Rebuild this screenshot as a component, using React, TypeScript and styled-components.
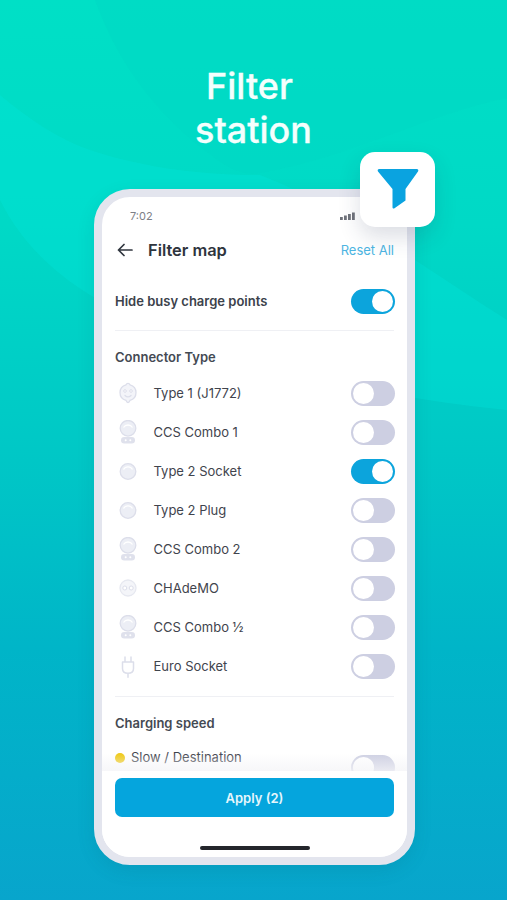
import styled, { createGlobalStyle } from "styled-components";

const GlobalStyle = createGlobalStyle`
  html, body {
    margin: 0;
    padding: 0;
  }
  body {
    font-family: "Inter", "Liberation Sans", sans-serif;
  }
`;

const Page = styled.div`
  position: relative;
  width: 507px;
  height: 900px;
  overflow: hidden;
  display: flex;
  flex-direction: column;
  align-items: center;
  padding-top: 64px;
  box-sizing: border-box;
  background: linear-gradient(180deg, #00e0c6 0%, #00d9c6 25%, #00c8c6 50%, #00b5c8 72%, #08a5cc 100%);
`;

const Swirl = styled.svg`
  position: absolute;
  left: 0;
  top: 0;
`;

const Title = styled.h1`
  position: relative;
  margin: 0 8px 0 0;
  color: #f4fffd;
  font-size: 36px;
  font-weight: 500;
  line-height: 44px;
  text-align: center;
  -webkit-text-stroke: 0.3px #f4fffd;
`;

const TitleLine = styled.span<{ $shift: number }>`
  display: block;
  padding-left: ${(p) => p.$shift}px;
`;

const Phone = styled.div`
  position: relative;
  width: 321px;
  height: 676px;
  margin-top: 37px;
  margin-left: 2px;
  box-sizing: border-box;
  border: 8px solid #e3e5ee;
  border-radius: 36px;
  background: #fff;
  box-shadow: 0 6px 18px rgba(0, 80, 100, 0.12);
  display: flex;
  flex-direction: column;
`;

const Badge = styled.div`
  position: absolute;
  top: -45px;
  right: -28px;
  width: 75px;
  height: 75px;
  border-radius: 15px;
  background: #fff;
  box-shadow: 0 10px 22px rgba(40, 50, 90, 0.16);
  display: flex;
  align-items: center;
  justify-content: center;
  z-index: 2;
`;

const StatusBar = styled.div`
  height: 38px;
  padding: 0 52px 0 28px;
  display: flex;
  align-items: center;
  justify-content: space-between;
  color: #7d8087;
  font-size: 11px;
`;

const Header = styled.div`
  height: 30px;
  padding: 0 13px 0 15px;
  display: flex;
  align-items: center;
`;

const BackButton = styled.div`
  width: 31px;
  height: 20px;
  display: flex;
  align-items: center;
`;

const HeaderTitle = styled.div`
  flex: 1;
  color: #2e343d;
  font-size: 16.4px;
  font-weight: 600;
`;

const ResetLink = styled.div`
  color: #4db5e2;
  font-size: 13px;
`;

const Scroll = styled.div`
  height: 506px;
  overflow: hidden;
  padding: 24px 12px 0 13px;
  box-sizing: border-box;
  flex-shrink: 0;
`;

const Row = styled.div`
  height: 25px;
  display: flex;
  align-items: center;
  justify-content: space-between;
`;

const RowStrong = styled.div`
  padding-bottom: 2px;
  color: #3c424b;
  font-size: 13px;
  font-weight: 600;
`;

const Divider = styled.div`
  height: 1px;
  margin: 16px 1px 18px 0;
  background: #eff0f4;
`;

const SectionTitle = styled.div`
  height: 17px;
  line-height: 17px;
  color: #444a53;
  font-size: 13px;
  font-weight: 600;
`;

const List = styled.div`
  margin-top: 15px;
  margin-bottom: 17px;
  display: flex;
  flex-direction: column;
  gap: 14px;

  & + ${Divider} {
    margin-top: 0;
  }
`;

const Label = styled.div`
  flex: 1;
  display: flex;
  align-items: center;
  color: #3f444d;
  font-size: 13px;
`;

const LabelText = styled.span`
  padding-bottom: 1px;
`;

const IconSlot = styled.div`
  width: 38.5px;
  height: 25px;
  padding-left: 1px;
  box-sizing: border-box;
  display: flex;
  align-items: center;
`;

const Toggle = styled.div<{ $on?: boolean }>`
  position: relative;
  flex-shrink: 0;
  width: 44px;
  height: 25px;
  border-radius: 13px;
  background: ${(p) => (p.$on ? "#0ca4dc" : "#cdcfe2")};

  &::after {
    content: "";
    position: absolute;
    top: 2px;
    left: ${(p) => (p.$on ? "21px" : "2px")};
    width: 21px;
    height: 21px;
    border-radius: 50%;
    background: #fff;
  }
`;

const SpeedRow = styled.div`
  margin-top: 17px;
  display: flex;
  justify-content: space-between;
  align-items: flex-start;
`;

const SpeedLabel = styled.div`
  display: flex;
  align-items: center;
  gap: 6px;
  color: #3f444d;
  font-size: 13px;
  line-height: 17px;
`;

const Dot = styled.span`
  width: 10px;
  height: 10px;
  border-radius: 50%;
  background: #efc915;
`;

const SpeedToggle = styled(Toggle)`
  margin-top: 6px;
`;

const Footer = styled.div`
  position: relative;
  flex: 1;
  padding: 7px 13px 0;
  display: flex;
  flex-direction: column;
  align-items: center;
  border-radius: 0 0 28px 28px;
  background: #fff;

  &::before {
    content: "";
    position: absolute;
    left: 0;
    right: 0;
    top: -18px;
    height: 18px;
    background: linear-gradient(rgba(255, 255, 255, 0), rgba(244, 244, 247, 0.75));
  }
`;

const ApplyButton = styled.button`
  width: 279px;
  height: 39px;
  border: 0;
  border-radius: 7px;
  background: #05a5dd;
  color: #e6f6fc;
  font-family: inherit;
  font-size: 13px;
  font-weight: 600;
`;

const HomeBar = styled.div`
  width: 110px;
  height: 4px;
  margin-top: 29px;
  border-radius: 2px;
  background: #24262b;
`;

type PlugKind = "type1" | "combo" | "type2" | "chademo" | "euro";

const PlugIcon = ({ kind }: { kind: PlugKind }) => {
  const line = "#dcdeea";
  const fill = "#eceef5";
  return (
    <svg width="24" height="26" viewBox="0 0 24 26" fill="none">
      {kind === "type1" && (
        <>
          <path d="M10 3.800c.4-1 1.100-1.500 2-1.500s1.600.5 2 1.500c3.500 1 6 3.900 6 7.700 0 3.900-2.500 6.900-6 7.900-.4 1.100-1.100 2.100-2 2.100s-1.600-1-2-2.100c-3.500-1-6-4-6-7.900 0-3.800 2.500-6.700 6-7.700Z" fill="#f3f4f9" stroke={line} strokeWidth="1.300" />
          <circle cx="9" cy="10" r="1.300" fill="#fff" stroke={line} />
          <circle cx="15" cy="10" r="1.300" fill="#fff" stroke={line} />
          <path d="M9 14.500c1.800 1.700 4.200 1.700 6 0" stroke={line} strokeWidth="1.300" strokeLinecap="round" />
        </>
      )}
      {kind === "combo" && (
        <>
          <circle cx="12" cy="8.300" r="7.800" fill={fill} stroke={line} strokeWidth="1.300" />
          <path d="M7.500 7.500c1-1.700 2.500-2.500 4.500-2.500s3.500.8 4.500 2.500" stroke="#fff" strokeWidth="1.300" />
          <rect x="5" y="17" width="14" height="6.500" rx="3.250" fill="#dfe1ec" />
          <circle cx="9.700" cy="20.250" r="1" fill="#fff" />
          <circle cx="14.300" cy="20.250" r="1" fill="#fff" />
        </>
      )}
      {kind === "type2" && (
        <>
          <circle cx="12" cy="12.500" r="7.800" fill={fill} stroke={line} strokeWidth="1.300" />
          <path d="M7.500 10.500c1-1.800 2.500-2.600 4.500-2.600s3.500.8 4.500 2.600" stroke="#fff" strokeWidth="1.300" />
        </>
      )}
      {kind === "chademo" && (
        <>
          <circle cx="12" cy="12" r="8" fill="#f4f5f9" stroke="#e6e8f0" strokeWidth="1.300" />
          <circle cx="8.800" cy="12" r="2" fill="#fff" stroke={line} />
          <circle cx="15.200" cy="12" r="2" fill="#fff" stroke={line} />
        </>
      )}
      {kind === "euro" && (
        <path d="M9 3v5M15 3v5M6.500 8h11v6.500c0 3-2.200 4.800-5.500 4.800s-5.500-1.800-5.500-4.800V8ZM12 19.300v4" stroke={line} strokeWidth="1.500" strokeLinecap="round" strokeLinejoin="round" />
      )}
    </svg>
  );
};

const connectors: { name: string; kind: PlugKind; on?: boolean }[] = [
  { name: "Type 1 (J1772)", kind: "type1" },
  { name: "CCS Combo 1", kind: "combo" },
  { name: "Type 2 Socket", kind: "type2", on: true },
  { name: "Type 2 Plug", kind: "type2" },
  { name: "CCS Combo 2", kind: "combo" },
  { name: "CHAdeMO", kind: "chademo" },
  { name: "CCS Combo ½", kind: "combo" },
  { name: "Euro Socket", kind: "euro" },
];

export default function App() {
  return (
    <>
      <GlobalStyle />
      <Page>
        <Swirl width="507" height="900" viewBox="0 0 507 900" fill="none">
          <path d="M95 0c25 70 70 125 130 165 15 8 25 10 35 8 90-15 170-60 247-75V0H95Z" fill="#00d6c4" opacity="0.45" />
          <path d="M0 95c30 25 60 45 90 55 60 20 120 25 170 25 80 30 160 90 247 145v90c-150-15-310-55-417-115C50 270 20 240 0 200V95Z" fill="#00e6dc" opacity="0.32" />
        </Swirl>
        <Title>
          <TitleLine $shift={0}>Filter</TitleLine>
          <TitleLine $shift={8}>station</TitleLine>
        </Title>
        <Phone>
          <Badge>
            <svg width="44" height="44" viewBox="0 0 44 44">
              <path d="M3.200 1h37.600c1.300 0 2 1.400 1.200 2.400L29.500 21v11.500l-11 7.800c-1 .7-2 .1-2-1V21L2 3.400C1.200 2.400 1.900 1 3.200 1Z" fill="#0aa3e0" />
            </svg>
          </Badge>
          <StatusBar>
            <span>7:02</span>
            <svg width="15" height="8" viewBox="0 0 15 8" fill="#6f727a">
              <rect x="0" y="5" width="2.800" height="3" />
              <rect x="4" y="3.500" width="2.800" height="4.500" />
              <rect x="8" y="2" width="2.800" height="6" />
              <rect x="12" y="0.500" width="2.800" height="7.500" />
            </svg>
          </StatusBar>
          <Header>
            <BackButton>
              <svg width="16" height="14" viewBox="0 0 16 14" fill="none" stroke="#30363f" strokeWidth="1.700" strokeLinecap="round" strokeLinejoin="round">
                <path d="M15 7H1.500M7 1.500 1.500 7 7 12.500" />
              </svg>
            </BackButton>
            <HeaderTitle>Filter map</HeaderTitle>
            <ResetLink>Reset All</ResetLink>
          </Header>
          <Scroll>
            <Row>
              <RowStrong>Hide busy charge points</RowStrong>
              <Toggle $on />
            </Row>
            <Divider />
            <SectionTitle>Connector Type</SectionTitle>
            <List>
              {connectors.map((c) => (
                <Row key={c.name}>
                  <Label>
                    <IconSlot>
                      <PlugIcon kind={c.kind} />
                    </IconSlot>
                    <LabelText>{c.name}</LabelText>
                  </Label>
                  <Toggle $on={c.on} />
                </Row>
              ))}
            </List>
            <Divider />
            <SectionTitle>Charging speed</SectionTitle>
            <SpeedRow>
              <SpeedLabel>
                <Dot />
                Slow / Destination
              </SpeedLabel>
              <SpeedToggle />
            </SpeedRow>
          </Scroll>
          <Footer>
            <ApplyButton>Apply (2)</ApplyButton>
            <HomeBar />
          </Footer>
        </Phone>
      </Page>
    </>
  );
}
